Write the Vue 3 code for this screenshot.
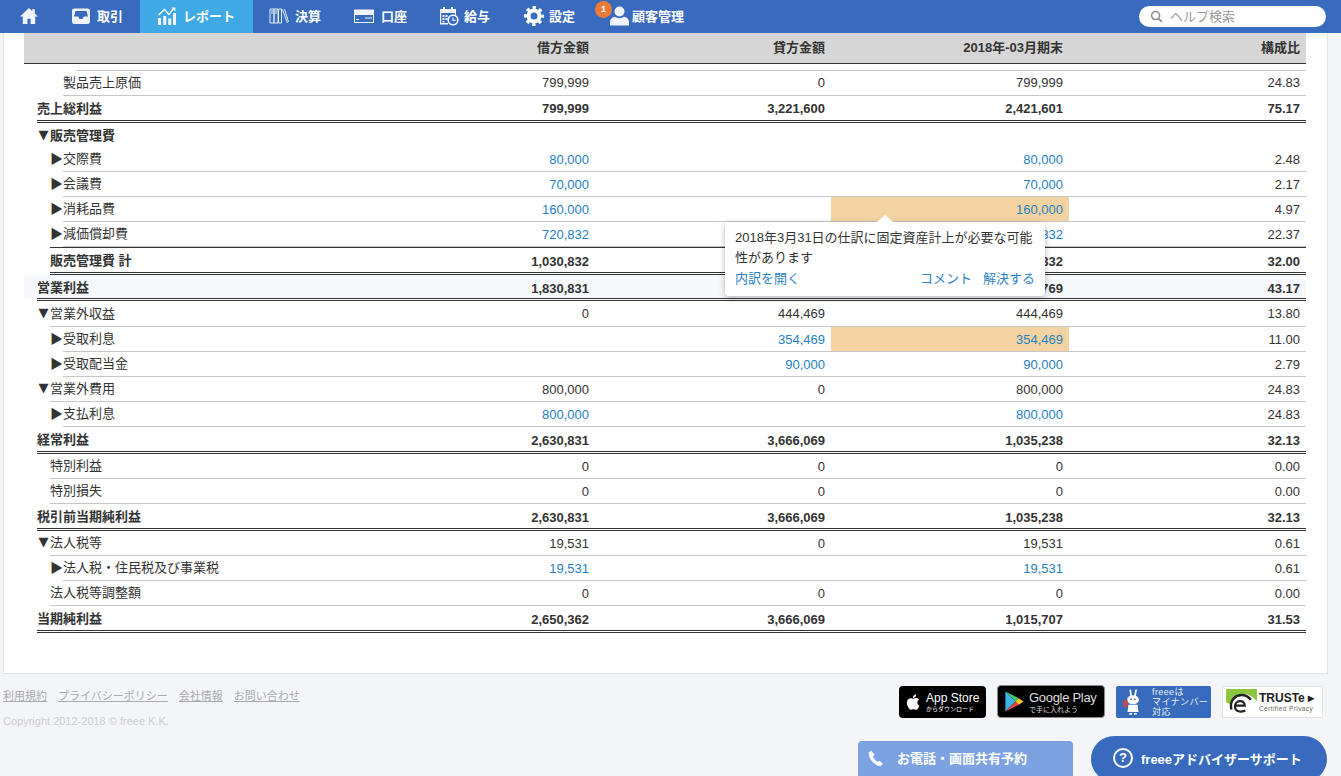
<script setup>
const rows = [
  { label: '製品売上原価', depth: 2, kind: 'up', vals: ['799,999', '0', '799,999', '24.83'] },
  { label: '売上総利益', depth: 0, kind: 'total first', vals: ['799,999', '3,221,600', '2,421,601', '75.17'] },
  { label: '販売管理費', depth: 1, arrow: '▼', kind: 'head', vals: ['', '', '', ''] },
  { label: '交際費', depth: 2, arrow: '▶', link: true, vals: ['80,000', '', '80,000', '2.48'] },
  { label: '会議費', depth: 2, arrow: '▶', link: true, vals: ['70,000', '', '70,000', '2.17'] },
  { label: '消耗品費', depth: 2, arrow: '▶', link: true, hl: true, vals: ['160,000', '', '160,000', '4.97'] },
  { label: '減価償却費', depth: 2, arrow: '▶', link: true, vals: ['720,832', '', '720,832', '22.37'] },
  { label: '販売管理費 計', depth: 1, kind: 'sub', vals: ['1,030,832', '', '1,030,832', '32.00'] },
  { label: '営業利益', depth: 0, kind: 'total band', vals: ['1,830,831', '', '1,391,769', '43.17'] },
  { label: '営業外収益', depth: 1, arrow: '▼', kind: 'tall', vals: ['0', '444,469', '444,469', '13.80'] },
  { label: '受取利息', depth: 2, arrow: '▶', link: true, hl: true, vals: ['', '354,469', '354,469', '11.00'] },
  { label: '受取配当金', depth: 2, arrow: '▶', link: true, vals: ['', '90,000', '90,000', '2.79'] },
  { label: '営業外費用', depth: 1, arrow: '▼', vals: ['800,000', '0', '800,000', '24.83'] },
  { label: '支払利息', depth: 2, arrow: '▶', link: true, vals: ['800,000', '', '800,000', '24.83'] },
  { label: '経常利益', depth: 0, kind: 'total', vals: ['2,630,831', '3,666,069', '1,035,238', '32.13'] },
  { label: '特別利益', depth: 1, vals: ['0', '0', '0', '0.00'] },
  { label: '特別損失', depth: 1, vals: ['0', '0', '0', '0.00'] },
  { label: '税引前当期純利益', depth: 0, kind: 'total', vals: ['2,630,831', '3,666,069', '1,035,238', '32.13'] },
  { label: '法人税等', depth: 1, arrow: '▼', vals: ['19,531', '0', '19,531', '0.61'] },
  { label: '法人税・住民税及び事業税', depth: 2, arrow: '▶', link: true, vals: ['19,531', '', '19,531', '0.61'] },
  { label: '法人税等調整額', depth: 1, vals: ['0', '0', '0', '0.00'] },
  { label: '当期純利益', depth: 0, kind: 'total', vals: ['2,650,362', '3,666,069', '1,015,707', '31.53'] },
]
</script>

<template>
  <div class="page">
    <!-- top nav -->
    <nav class="nav">
      <a class="nav-item nav-home">
        <svg viewBox="0 0 20 20" class="ico"><path d="M10 2 1 10.500h2.800V18h4.600v-5.200h3.200V18h4.600v-7.500H19l-3.200-3V3.200h-2.600v1.900z" /></svg>
      </a>
      <a class="nav-item nav-deal">
        <svg viewBox="0 0 20 20" class="ico"><path fill-rule="evenodd" d="M3.500 2.500h13a2.500 2.500 0 0 1 2.500 2.500v10.500a2.500 2.500 0 0 1-2.500 2.500h-13A2.500 2.500 0 0 1 1 15.500V5a2.500 2.500 0 0 1 2.500-2.500zM4.500 5 3 10.500h4.200l1.300 2.500h3l1.300-2.500H17L15.500 5z" /></svg>
        取引
      </a>
      <a class="nav-item nav-report active">
        <svg viewBox="0 0 20 20" class="ico">
          <path d="M1 12h3v7H1zM6.200 10h3v9h-3zM11.200 12.500h3V19h-3zM16 7h3v12h-3z" />
          <path d="M1.500 9 7.500 3.500l4.500 5 5-6.500" fill="none" stroke="#fff" stroke-width="1.300" />
          <path d="M14.500 1.500h4v4z" />
        </svg>
        レポート
      </a>
      <a class="nav-item nav-book">
        <svg viewBox="0 0 20 20" class="ico ico-line">
          <path d="M1 3h4v14H1zM5 3h4v14H5zM9.500 3h3v14h-3zM13.500 3.500l4.800 13.500M15.500 3l4 13" />
          <path d="M2 5h2M6 5h2M2 7h2M6 7h2" />
        </svg>
        決算
      </a>
      <a class="nav-item nav-bank">
        <svg viewBox="0 0 20 20" class="ico">
          <path fill-rule="evenodd" d="M0 3.500h20v13.500H0zM1 9v7h18V9z" />
          <path d="M2 13h3v1H2zM11 11.500h7v1h-7z" />
        </svg>
        口座
      </a>
      <a class="nav-item nav-pay">
        <svg viewBox="0 0 20 20" class="ico">
          <path fill-rule="evenodd" d="M1 3h3V1h2v2h6V1h2v2h3v7h-1.200V7H2.200v10H9v1.500H1z" />
          <path d="M3.500 9h2v2h-2zM6.500 9h2v2h-2zM3.500 12h2v2h-2zM6.500 12h2v2h-2zM3.500 15h2v1.500h-2z" />
          <circle cx="14" cy="14" r="4.800" fill="none" stroke="#fff" stroke-width="1.600" />
          <path d="M13.400 11.500h1.100v2.300h2v1.100h-3.100z" />
        </svg>
        給与
      </a>
      <a class="nav-item nav-set">
        <svg viewBox="0 0 20 20" class="ico ico-gear">
          <circle cx="10" cy="10" r="5.500" fill="none" stroke="#fff" stroke-width="4" />
          <circle cx="10" cy="10" r="8.300" fill="none" stroke="#fff" stroke-width="3.200" stroke-dasharray="3.300 3.220" stroke-dashoffset="1.650" />
        </svg>
        設定
      </a>
      <a class="nav-item nav-customer">
        <span class="badge">1</span>
        <svg viewBox="0 0 20 20" class="ico ico-person">
          <circle cx="10.500" cy="5.500" r="5" />
          <path d="M1 19.500v-3.500c0-3.300 3-5 5-5.200 2.500 1.800 6.500 1.800 9 0 2 .2 5 1.900 5 5.200v3.500z" />
        </svg>
        顧客管理
      </a>
      <label class="search">
        <svg viewBox="0 0 14 14" class="search-ico"><circle cx="6" cy="6" r="4.300" fill="none" stroke="#8e8e8e" stroke-width="1.700" /><path d="m9.200 9.200 3.600 3.600" stroke="#8e8e8e" stroke-width="2" /></svg>
        <span class="search-txt">ヘルプ検索</span>
      </label>
    </nav>

    <!-- report card -->
    <main class="card">
      <div class="thead">
        <span></span>
        <span class="num">借方金額</span>
        <span class="num">貸方金額</span>
        <span class="num">2018年-03月期末</span>
        <span class="num">構成比</span>
      </div>
      <div class="cut-row"></div>

      <div v-for="r in rows" :key="r.label" class="line" :class="[`d${r.depth}`, r.kind]">
        <div class="row">
          <div class="label">
            <span v-if="r.arrow" class="arrow" :class="{ down: r.arrow === '▼' }">{{ r.arrow }}</span>{{ r.label }}
          </div>
          <div
            v-for="(v, i) in r.vals"
            :key="i"
            class="num"
            :class="{ link: r.link && i < 3, hl: r.hl && i === 2 }"
          >{{ v }}</div>
        </div>
      </div>

      <!-- alert popover -->
      <div class="pop">
        <p class="pop-text">2018年3月31日の仕訳に固定資産計上が必要な可能性があります</p>
        <div class="pop-links">
          <a>内訳を開く</a>
          <span class="pop-right"><a>コメント</a><a>解決する</a></span>
        </div>
      </div>
    </main>

    <footer class="foot">
      <div class="foot-left">
        <div class="foot-links">
          <a>利用規約</a><a>プライバシーポリシー</a><a>会社情報</a><a>お問い合わせ</a>
        </div>
        <p class="copy">Copyright 2012-2018 © freee K.K.</p>
      </div>
      <div class="foot-badges">
        <div class="bdg bdg-apple">
          <svg viewBox="0 0 20 24" class="apple"><path d="M14.600 12.600c0-2.300 1.900-3.400 2-3.500-1.100-1.600-2.800-1.800-3.400-1.800-1.400-.1-2.800.9-3.500.9s-1.900-.9-3.100-.8c-1.600 0-3 .9-3.800 2.300-1.600 2.800-.4 7 1.200 9.300.8 1.100 1.700 2.400 2.900 2.300 1.200 0 1.600-.7 3-.7s1.800.7 3 .7 2-1.100 2.800-2.200c.9-1.300 1.200-2.500 1.300-2.600-.1 0-2.400-.9-2.400-3.900zM12.300 5.800c.6-.8 1.100-1.900.9-3-.9 0-2.100.6-2.800 1.400-.6.700-1.100 1.800-1 2.900 1.100.1 2.200-.5 2.900-1.300z" /></svg>
          <div class="bdg-txt">
            <span class="apple-a">App Store</span>
            <span class="apple-b">からダウンロード</span>
          </div>
        </div>
        <div class="bdg bdg-play">
          <svg viewBox="0 0 20 24" class="play">
            <path d="M1 1.500v21L11.500 12z" fill="#3bb4e8" />
            <path d="M1 1.500 11.500 12l3.500-3.500z" fill="#45c477" />
            <path d="M1 22.500 11.500 12l3.500 3.500z" fill="#e8414c" />
            <path d="M15 8.500 11.500 12l3.500 3.500 5-3.500z" fill="#f8c325" />
          </svg>
          <div class="bdg-txt">
            <span class="play-a">Google Play</span>
            <span class="play-b">で手に入れよう</span>
          </div>
        </div>
        <div class="bdg bdg-my">
          <svg viewBox="0 0 24 30" class="rabbit">
            <path d="M9 1.500 10 9M15.500 1.500 14 9" stroke="#fff" stroke-width="1.800" fill="none" />
            <ellipse cx="12" cy="12.500" rx="6.500" ry="5" fill="#fff" />
            <path d="M7 18h10l1 8H6z" fill="#fff" />
            <path d="M1 14l5-2v8l-4 1z" fill="#c94a3f" />
            <path d="M8 27h3v2H8zM13 27h3v2h-3z" fill="#fff" />
            <circle cx="10" cy="12" r=".9" fill="#333" /><circle cx="14" cy="12" r=".9" fill="#333" />
          </svg>
          <div class="my-txt">freeeは<br />マイナンバー<br />対応</div>
        </div>
        <div class="bdg bdg-truste">
          <svg viewBox="0 0 36 30" class="truste-ico">
            <path d="M1 1h33v13.500C29 8 24 6.500 18 6.500 11 6.500 7 11 5.500 18L1 15z" fill="#8cc63f" />
            <circle cx="17" cy="18" r="10" fill="#fff" />
            <path d="M6.500 23C4.500 12 12 7.500 17.500 7.500c4 0 7.500 2 10 5" fill="none" stroke="#222" stroke-width="2.600" />
            <path d="M11 19h10c0-7-10.500-6-10.500.5S17 26 21.500 24" fill="none" stroke="#222" stroke-width="2.400" />
          </svg>
          <div class="bdg-txt">
            <span class="tr-a">TRUSTe ▸</span>
            <span class="tr-b">Certified Privacy</span>
          </div>
        </div>
      </div>
    </footer>

    <!-- floating help buttons -->
    <a class="btn-phone">
      <svg viewBox="0 0 18 18" class="phone-ico"><path d="M4.500.8 1.800 2.300C1.200 8 7 16 14 17.200l2.700-2.300-3.400-3.500-2 1.200C9 11.500 7 9 6.300 6.700l1.800-1.500z" /></svg>
      お電話・画面共有予約
    </a>
    <a class="btn-adv">
      <span class="q">?</span>
      freeeアドバイザーサポート
    </a>
  </div>
</template>

<style scoped>
.page {
  position: relative;
  height: 776px;
  overflow: hidden;
  background: #f3f5f9;
  color: #333;
  font-family: "Liberation Sans", "Noto Sans CJK JP", sans-serif;
  font-size: 13px;
}

/* nav */
.nav {
  display: flex;
  align-items: center;
  height: 33px;
  background: #386bbd;
}
.nav-item {
  display: flex;
  align-items: center;
  gap: 6px;
  height: 33px;
  padding-left: 17px;
  padding-bottom: 2px;
  box-sizing: border-box;
  color: #fff;
  font-weight: 700;
}
.ico { width: 20px; height: 20px; fill: #f0f4fa; flex: none; }
.ico-line { fill: none; stroke: #e6ecf6; stroke-width: 1; }
.nav-home { width: 54px; padding-left: 19px; }
.nav-deal { width: 86px; }
.nav-report { width: 113px; }
.nav-book { width: 84px; padding-left: 16px; }
.nav-bank { width: 85px; gap: 7px; }
.nav-pay { width: 85px; gap: 5px; }
.nav-set { width: 84px; gap: 5px; }
.nav-customer { position: relative; padding-left: 18px; gap: 3px; }
.active { background: #3fa9e5; }
.badge {
  position: absolute;
  left: 4px;
  top: 1px;
  width: 17px;
  height: 17px;
  border-radius: 50%;
  background: #ec7a37;
  color: #fff;
  font-size: 9px;
  line-height: 17px;
  text-align: center;
}
.search {
  display: flex;
  align-items: center;
  gap: 7px;
  width: 187px;
  height: 21px;
  margin-left: auto;
  margin-right: 15px;
  padding-left: 11px;
  box-sizing: border-box;
  border-radius: 11px;
  background: #fff;
  color: #999;
}
.search-ico { width: 13px; height: 13px; }
.search-txt { margin-top: -3px; }

/* card */
.card {
  position: relative;
  height: 641px;
  margin: 0 13px 0 3px;
  padding: 0 21px 0 20px;
  box-sizing: border-box;
  background: #fff;
  border: 1px solid #e2e4e8;
  border-top: 0;
}
.thead {
  display: grid;
  grid-template-columns: minmax(0, 1fr) 236px 236px 238px 237px;
  height: 31px;
  padding-bottom: 3px;
  box-sizing: border-box;
  background: #d6d6d6;
  border-bottom: 1px solid #333;
  font-weight: 700;
}
.cut-row {
  height: 7px;
  margin-left: 52px;
  box-sizing: border-box;
  border-bottom: 1px solid #c6c6c6;
}
.line.d0 { padding-left: 13px; }
.line.d1 { padding-left: 26px; }
.line.d2 { padding-left: 39px; }
.row {
  display: grid;
  grid-template-columns: minmax(0, 1fr) 236px 236px 238px 237px;
  height: 25px;
  box-sizing: border-box;
  border-bottom: 1px solid #c6c6c6;
}
.label {
  display: flex;
  align-items: center;
  padding-bottom: 3px;
  box-sizing: border-box;
  white-space: nowrap;
}
.arrow {
  width: 13px;
  margin-left: -13px;
  text-align: center;
}
.arrow.down { font-family: "DejaVu Sans", sans-serif; }
.num {
  display: flex;
  align-items: center;
  justify-content: flex-end;
  padding-right: 6px;
  white-space: nowrap;
}
.link { color: #1f80c4; }
.hl { background: #f3d3a1; }
.total .row { height: 27px; border-bottom: 3px double #333; font-weight: 700; }
.total .num, .sub .num { padding-top: 2px; }
.total .label, .sub .label { padding-bottom: 2px; }
.sub .row { height: 28px; border-top: 1px solid #333; border-bottom: 3px double #333; font-weight: 700; }
.head .row { height: 24px; border-bottom: 0; font-weight: 700; }
.head .label { padding-bottom: 2px; }
.tall .row { height: 26px; }
.band .row { height: 26px; }
.band .num { padding-top: 3px; }
.band .label { padding-top: 1px; }
.band { background: linear-gradient(#f6f8fc 23px, transparent 23px); }
.up .num { padding-bottom: 2px; }
.first .num { padding-top: 0; }

/* popover */
.pop {
  position: absolute;
  left: 721px;
  top: 189px;
  width: 320px;
  height: 74px;
  padding: 6px 10px 0;
  box-sizing: border-box;
  background: #fff;
  border-radius: 4px;
  box-shadow: 0 2px 6px rgba(0, 0, 0, 0.28);
}
.pop::before {
  content: "";
  position: absolute;
  left: 152px;
  top: -7px;
  border-left: 8px solid transparent;
  border-right: 8px solid transparent;
  border-bottom: 7px solid #fff;
}
.pop-text {
  margin: 0;
  line-height: 20px;
}
.pop-links {
  display: flex;
  justify-content: space-between;
  margin-top: 2px;
  color: #2b82c6;
  line-height: 18px;
}
.pop-right { display: flex; gap: 11px; }

/* footer */
.foot {
  display: flex;
  justify-content: space-between;
  padding: 12px 18px 0 3px;
}
.foot-links {
  display: flex;
  gap: 11px;
  margin-top: 2px;
  font-size: 11px;
  line-height: 16px;
  color: #aaa;
}
.foot-links a { text-decoration: underline; }
.copy {
  margin: 9px 0 0;
  font-size: 11px;
  line-height: 16px;
  color: #ccc;
}
.foot-badges {
  display: flex;
  align-items: flex-start;
  gap: 11px;
}
.bdg {
  display: flex;
  align-items: center;
  box-sizing: border-box;
  height: 32px;
  border-radius: 4px;
}
.bdg-txt { display: flex; flex-direction: column; white-space: nowrap; }
.bdg-apple { width: 87px; background: #000; color: #fff; padding-left: 6px; gap: 4px; }
.apple { width: 17px; height: 20px; fill: #fff; }
.apple-a { font-size: 12px; line-height: 13px; }
.apple-b { font-size: 6px; line-height: 8px; }
.bdg-play { width: 108px; height: 33px; margin-top: -1px; background: #000; border: 1px solid #888; color: #ddd; padding-left: 6px; gap: 5px; }
.play { width: 20px; height: 23px; }
.play-a { font-size: 13px; line-height: 15px; letter-spacing: -0.3px; }
.play-b { font-size: 7px; line-height: 9px; }
.bdg-my { width: 95px; background: #386bbd; border-radius: 2px; padding-left: 6px; gap: 8px; }
.rabbit { width: 22px; height: 28px; }
.my-txt { font-size: 9px; line-height: 10px; color: #e8eef8; letter-spacing: 0.4px; white-space: nowrap; }
.bdg-truste { width: 101px; background: #fff; border: 1px solid #e4e4e4; border-radius: 2px; padding-left: 2px; gap: 0; color: #222; }
.truste-ico { width: 34px; height: 28px; }
.tr-a { font-size: 12px; line-height: 13px; font-weight: 700; }
.tr-b { font-size: 6.500px; line-height: 8px; letter-spacing: 0.4px; color: #666; }

/* floating buttons */
.btn-phone {
  position: absolute;
  left: 858px;
  top: 741px;
  display: flex;
  align-items: flex-start;
  gap: 13px;
  width: 215px;
  height: 40px;
  padding: 9px 0 0 9px;
  box-sizing: border-box;
  background: #7da2e2;
  border-radius: 4px 4px 0 0;
  color: #fff;
  font-weight: 700;
  line-height: 18px;
}
.phone-ico { width: 17px; height: 17px; fill: #fff; }
.btn-adv {
  position: absolute;
  left: 1091px;
  top: 736px;
  display: flex;
  align-items: center;
  gap: 8px;
  width: 236px;
  height: 46px;
  padding: 0 0 2px 22px;
  box-sizing: border-box;
  background: #386bbd;
  border-radius: 23px;
  color: #fff;
  font-weight: 700;
}
.q {
  width: 20px;
  height: 20px;
  box-sizing: border-box;
  border: 2px solid #fff;
  border-radius: 50%;
  font-size: 13px;
  line-height: 16px;
  text-align: center;
}
</style>

<style>
html, body { background: #f3f5f9; overflow: hidden; }
</style>
